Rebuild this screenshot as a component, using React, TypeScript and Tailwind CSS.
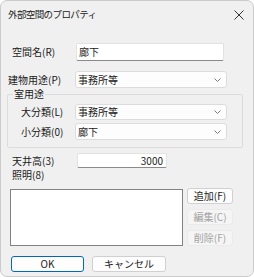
import React from "react";

const font = { fontFamily: '"Noto Sans CJK JP", "Noto Sans", sans-serif' };

function Chevron() {
  return (
    <svg width="7" height="4" viewBox="0 0 7 4" fill="none" className="mr-[5px]">
      <polyline points="0.5,0.5 3.5,3.5 6.5,0.5" stroke="#7a7a7a" strokeWidth="1" />
    </svg>
  );
}

function Select({ value, h }: { value: string; h: string }) {
  return (
    <div className={`w-[152px] ${h} flex items-center justify-between bg-[#fdfdfd] border border-[#dcdcdc] rounded-[3px]`}>
      <span className="pl-[2px] leading-none">{value}</span>
      <Chevron />
    </div>
  );
}

function Btn({ label, disabled }: { label: string; disabled?: boolean }) {
  return (
    <div
      className={
        disabled
          ? "w-[46px] h-[16px] flex items-center justify-center rounded-[3px] bg-[#f5f5f5] border border-[#ebebeb] text-[#a3a3a3] leading-none"
          : "w-[46px] h-[16px] flex items-center justify-center rounded-[3px] bg-[#fdfdfd] border border-[#d0d0d0] leading-none"
      }
    >
      {label}
    </div>
  );
}

export default function App() {
  return (
    <div className="w-[254px] h-[277px] bg-white" style={font}>
      <div className="w-full h-full bg-[#f0f0f0] border border-[#cbcbcb] rounded-[7px] flex flex-col text-[10px] text-[#1a1a1a]">
        {/* title bar */}
        <div className="h-[27px] flex items-center justify-between pl-[7px] pr-[9px]">
          <span className="text-[9.5px] tracking-[-0.6px] leading-none">外部空間のプロパティ</span>
          <svg width="10" height="10" viewBox="0 0 10 10">
            <path d="M0.5 0.5 L9.5 9.5 M9.5 0.5 L0.5 9.5" stroke="#333" strokeWidth="1" />
          </svg>
        </div>

        {/* 空間名 */}
        <div className="mt-[15px] h-[18px] flex items-center">
          <span className="w-[75px] pl-[11px] leading-none">空間名(R)</span>
          <div className="w-[148px] h-[18px] flex items-center bg-white border border-[#e2e2e2] border-b-[#8a8a8a] rounded-[2px]">
            <span className="pl-[2px] leading-none">廊下</span>
          </div>
        </div>

        {/* 建物用途 */}
        <div className="mt-[10px] h-[17px] flex items-center">
          <span className="w-[74px] pl-[7px] leading-none">建物用途(P)</span>
          <Select value="事務所等" h="h-[17px]" />
        </div>

        {/* 室用途 group */}
        <div className="relative mt-[6px] ml-[6px] w-[236px] h-[54px] border border-[#dcdcdc] rounded-[2px] flex flex-col">
          <span className="absolute left-[5px] top-[-6px] px-[1px] bg-[#f0f0f0] leading-none">室用途</span>
          <div className="mt-[9px] h-[16px] flex items-center">
            <span className="w-[67px] pl-[13px] leading-none">大分類(L)</span>
            <Select value="事務所等" h="h-[16px]" />
          </div>
          <div className="mt-[3px] h-[17px] flex items-center">
            <span className="w-[67px] pl-[13px] leading-none">小分類(0)</span>
            <Select value="廊下" h="h-[17px]" />
          </div>
        </div>

        {/* 天井高 */}
        <div className="mt-[5px] h-[15px] flex items-center">
          <span className="w-[76px] pl-[11px] leading-none">天井高(3)</span>
          <div className="w-[90px] h-[15px] flex items-center justify-end bg-white border border-[#e2e2e2] border-b-[#8a8a8a] rounded-[2px]">
            <span className="pr-[3px] leading-none">3000</span>
          </div>
        </div>

        {/* 照明 */}
        <div className="mt-[1px] h-[12px] flex items-center pl-[11px]">
          <span className="leading-none">照明(8)</span>
        </div>

        <div className="mt-[8px] h-[57px] flex ml-[9px] gap-[4px]">
          <div className="w-[173px] h-[57px] bg-white border border-[#828282]" />
          <div className="-mt-[1px] flex flex-col gap-[5px]">
            <Btn label="追加(F)" />
            <Btn label="編集(C)" disabled />
            <Btn label="削除(F)" disabled />
          </div>
        </div>

        {/* OK / cancel */}
        <div className="mt-[10px] h-[16px] flex ml-[10px] gap-[8px]">
          <div className="w-[73px] h-[16px] flex items-center justify-center bg-[#fdfdfd] border border-[#0067c0] rounded-[3px] leading-none">
            OK
          </div>
          <div className="w-[74px] h-[16px] flex items-center justify-center bg-[#fdfdfd] border border-[#d0d0d0] rounded-[3px] leading-none">
            キャンセル
          </div>
        </div>
      </div>
    </div>
  );
}
